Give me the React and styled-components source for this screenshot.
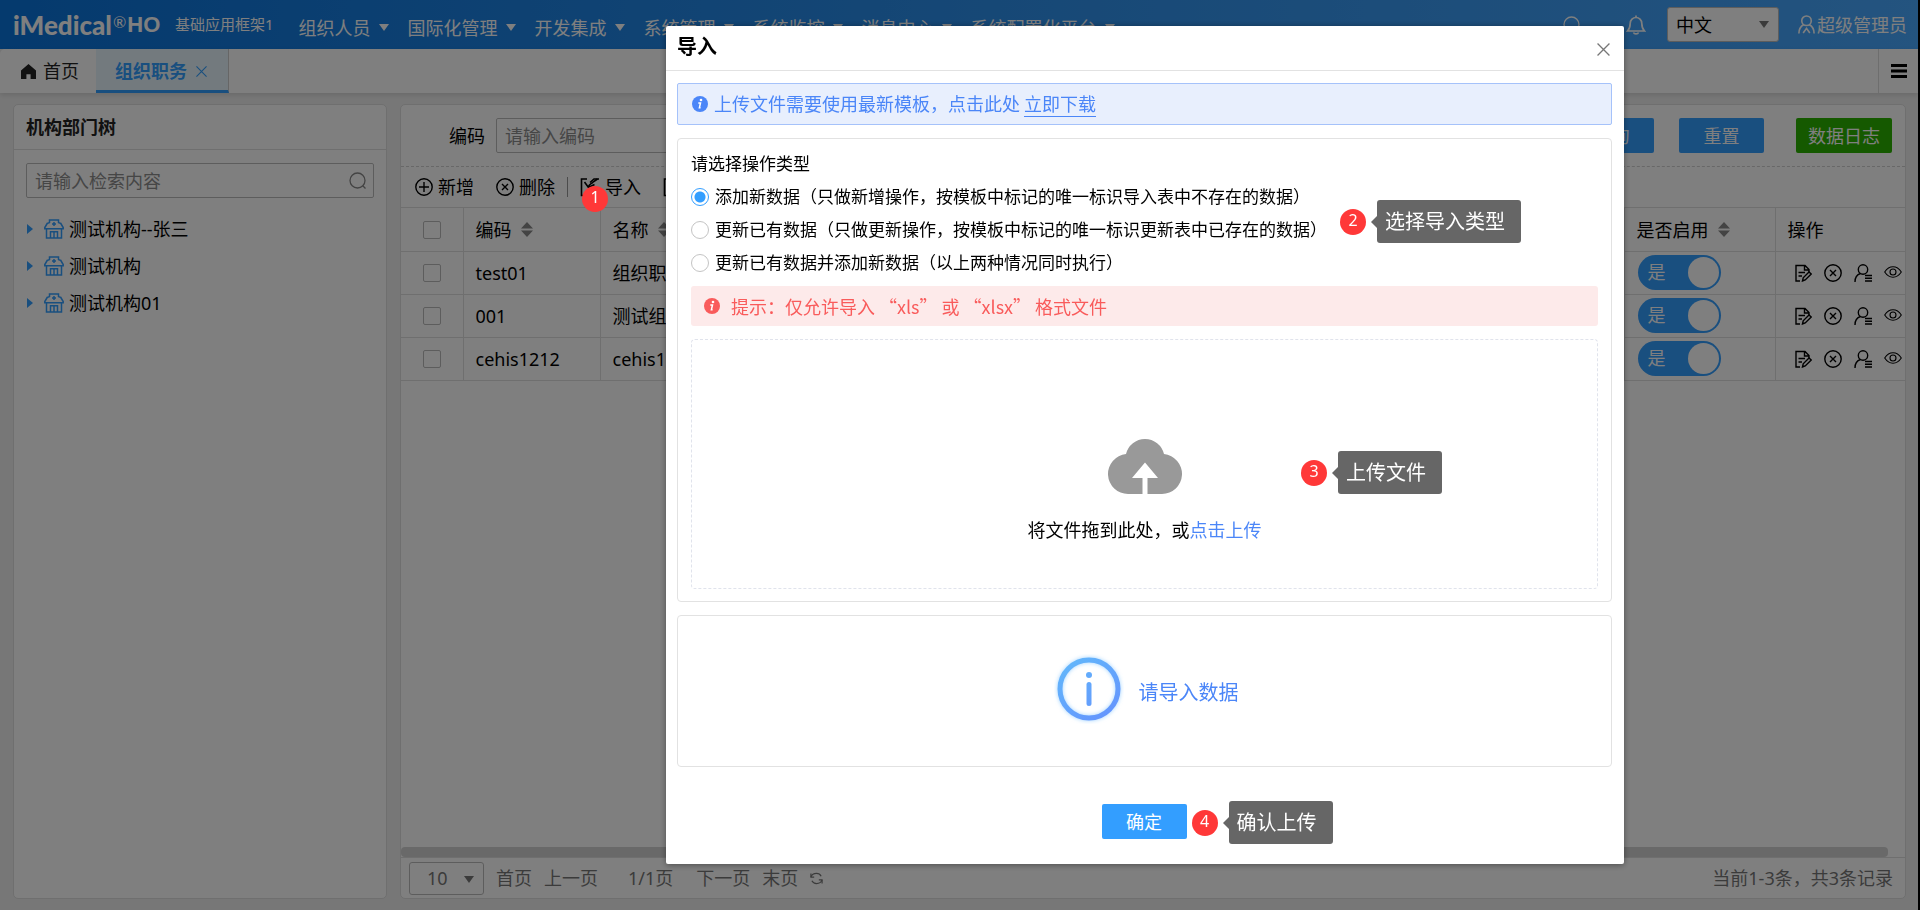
import React, { useState } from 'react';
import styled, { createGlobalStyle, css } from 'styled-components';

const GlobalStyle = createGlobalStyle`
  * {
    box-sizing: border-box;
  }

  body {
    margin: 0;
    font-family: 'Noto Sans', 'Noto Sans CJK SC', sans-serif;
    font-size: 18px;
    line-height: 24px;
    color: #000;
  }

  button,
  input,
  select {
    font: inherit;
    color: inherit;
  }

  button {
    padding: 0;
    border: none;
    background: none;
    cursor: pointer;
  }

  svg {
    display: block;
    flex: none;
  }
`;

const Screen = styled.div`
  display: flex;
  flex-direction: column;
  min-height: 100vh;
  background: #efefef;
  border-right: 2px solid #000;
`;

/* ---------- header ---------- */

const Header = styled.header`
  display: flex;
  align-items: center;
  height: 49px;
  padding: 0 11px 0 13px;
  color: #fff;
  background: linear-gradient(90deg, #0a74dc 0%, #2f92ee 55%, #48a8ff 100%);
`;

const Logo = styled.div`
  display: flex;
  align-items: center;
  width: 162px;
  font-family: Lato, sans-serif;
  font-size: 26px;
  font-weight: 900;
  white-space: nowrap;

  sup {
    margin: 0 1px;
    font-size: 16px;
    font-weight: 400;
    line-height: 18px;
    align-self: flex-start;
  }

  b {
    font-family: 'Liberation Sans', sans-serif;
    font-size: 22px;
    font-weight: 700;
  }
`;

const Subtitle = styled.span`
  padding-bottom: 1px;
  font-size: 15px;
  white-space: nowrap;
`;

const Menu = styled.nav`
  display: flex;
  flex: 1;
  gap: 19px;
  padding: 6px 0 0 25px;
`;

const MenuItem = styled.a`
  display: flex;
  align-items: center;
  gap: 8px;
  color: inherit;
  text-decoration: none;
  white-space: nowrap;
`;

const Caret = styled.span`
  border: 5px solid transparent;
  border-top: 7px solid currentColor;
  border-bottom: none;
`;

const HeaderTools = styled.div`
  display: flex;
  align-items: center;
  gap: 21px;
`;

const IconButton = styled.button`
  display: inline-flex;
  align-items: center;
  justify-content: center;
`;

const SearchButton = styled(IconButton)`
  margin-right: 24px;
`;

const SelectBox = styled.div`
  position: relative;
  color: #000;

  select {
    display: block;
    width: ${(p) => p.$width}px;
    height: 35px;
    padding: 0 24px 0 ${(p) => p.$pad}px;
    border: 1px solid #bbb;
    border-radius: 3px;
    background: #fff;
    appearance: none;
  }

  &::after {
    content: '';
    position: absolute;
    right: 10px;
    top: 14px;
    border: 5px solid transparent;
    border-top: 7px solid #777;
    border-bottom: none;
    pointer-events: none;
  }
`;

const User = styled.a`
  display: flex;
  align-items: center;
  gap: 1px;
  margin-left: -3px;
  color: inherit;
  text-decoration: none;
`;

/* ---------- tabs ---------- */

const TabBar = styled.div`
  display: flex;
  align-items: stretch;
  height: 44px;
  background: #fff;
  border-top-left-radius: 5px;
  box-shadow: 0 2px 5px rgba(0, 0, 0, 0.12);
`;

const Tab = styled.button`
  display: flex;
  align-items: center;
  gap: 7px;
  padding: 0 17px 0 21px;
  color: #222;

  ${(p) =>
    p.$active &&
    css`
      gap: 9px;
      padding: 3px 21px 0 19px;
      color: #339eff;
      font-weight: 700;
      background: #e6f5fc;
      border-bottom: 3px solid #339eff;
      border-right: 1px solid #ccc;
    `}
`;

const TabMenu = styled.button`
  width: 40px;
  margin-left: auto;
  padding-left: 12px;
  border-left: 1px solid #ddd;
`;

/* ---------- panels ---------- */

const Main = styled.main`
  display: flex;
  flex: 1;
  gap: 13px;
  padding: 11px 12px 11px 13px;
`;

const Panel = styled.section`
  display: flex;
  flex-direction: column;
  background: #fff;
  border: 1px solid #dedede;
  border-radius: 5px;
  overflow: hidden;
`;

const TreePanel = styled(Panel)`
  width: 374px;
`;

const GridPanel = styled(Panel)`
  flex: 1;
  min-width: 0;
`;

const PanelTitle = styled.h2`
  margin: 0;
  padding: 10px 12px;
  font-size: 18px;
  line-height: 24px;
  color: #222;
  border-bottom: 1px solid #dedede;
`;

const SearchBox = styled.label`
  display: flex;
  align-items: center;
  height: 35px;
  margin: 13px 12px 12px;
  padding: 0 6px 0 8px;
  border: 1px solid #bbb;
  border-radius: 2px;
  color: #888;

  input {
    flex: 1;
    min-width: 0;
    padding: 0;
    border: none;
    outline: none;
    background: none;
  }

  input::placeholder {
    color: #8c8c8c;
    opacity: 1;
  }
`;

const Tree = styled.ul`
  margin: 0;
  padding: 0 13px;
  list-style: none;
`;

const TreeNode = styled.li`
  display: flex;
  align-items: center;
  height: 37px;
  white-space: nowrap;

  svg {
    margin: 0 5px 0 11px;
    color: #339eff;
  }
`;

const Expander = styled.span`
  border: 5px solid transparent;
  border-left: 6px solid #339eff;
  border-right: none;
`;

const FilterBar = styled.form`
  display: flex;
  align-items: center;
  height: 62px;
  padding: 0 13px 0 48px;
  border-bottom: 1px dashed #d0d0d0;

  label {
    margin-right: 11px;
  }
`;

const FilterInput = styled.input`
  width: 180px;
  height: 35px;
  padding: 0 8px;
  border: 1px solid #bbb;
  border-radius: 2px;

  &::placeholder {
    color: #8c8c8c;
    opacity: 1;
  }
`;

const FilterActions = styled.div`
  display: flex;
  gap: 25px;
  margin-left: auto;
`;

const Button = styled.button`
  min-width: 85px;
  height: 35px;
  padding: 0 12px;
  color: #fff;
  background: ${(p) => (p.$green ? '#2bb300' : '#339eff')};
  border-radius: 2px;
`;

const LogButton = styled(Button)`
  margin-left: 7px;
`;

const Toolbar = styled.div`
  display: flex;
  align-items: center;
  height: 40px;
  padding-left: 14px;
`;

const ToolButton = styled.button`
  position: relative;
  display: flex;
  align-items: center;
  gap: 5px;
  margin-right: 22px;
  white-space: nowrap;
`;

const ToolDivider = styled.span`
  width: 1px;
  height: 20px;
  margin: 0 12px 0 -10px;
  background: #999;
`;

const Table = styled.table`
  width: 100%;
  table-layout: fixed;
  border-collapse: collapse;

  th,
  td {
    height: 43px;
    padding: 0 12px;
    border: 1px solid #dedede;
    border-left: none;
    text-align: left;
    font-weight: 400;
    white-space: nowrap;
    overflow: hidden;
  }

  th {
    height: 44px;
  }

  tr > :last-child {
    border-right: none;
  }

  tr > :first-child {
    padding: 0;
    text-align: center;
  }
`;

const Checkbox = styled.input.attrs({ type: 'checkbox' })`
  display: block;
  width: 18px;
  height: 18px;
  margin: 0 auto;
  border: 1px solid #bbb;
  border-radius: 2px;
  appearance: none;
`;

const HeadCell = styled.span`
  display: inline-flex;
  align-items: center;
  gap: 9px;
`;

const RowActions = styled.div`
  display: flex;
  align-items: center;
  gap: 12px;
  padding-left: 6px;
`;

const SwitchLabel = styled.label`
  display: flex;
  align-items: center;
  width: 83px;
  height: 35px;
  margin: -2px 0 0 1px;
  padding-left: 10px;
  color: #fff;
  background: #339eff;
  border-radius: 18px;

  input {
    width: 31px;
    height: 31px;
    margin: 0 2px 0 auto;
    background: #fff;
    border-radius: 50%;
    appearance: none;
  }
`;

const ScrollTrack = styled.div`
  height: 11px;
  margin-top: auto;
  padding-right: 17px;
  border-bottom: 1px solid #dedede;

  &::before {
    content: '';
    display: block;
    height: 10px;
    border-radius: 4px;
    background: #d2d2d2;
  }
`;

const Pager = styled.footer`
  display: flex;
  align-items: center;
  height: 40px;
  padding: 0 12px 0 8px;
  color: #777;

  select {
    height: 33px;
    color: #777;
  }

  button {
    margin-left: 12px;
  }
`;

const PageCount = styled.span`
  margin: 0 11px 0 30px;
`;

const PagerInfo = styled.span`
  margin-left: auto;
`;

/* ---------- import dialog ---------- */

const Overlay = styled.div`
  position: fixed;
  inset: 0;
  z-index: 10;
  padding: 26px 296px 0 666px;
  background: rgba(0, 0, 0, 0.5);
`;

const Dialog = styled.div`
  background: #fff;
  border-radius: 2px;
  box-shadow: 0 1px 6px rgba(0, 0, 0, 0.4);
`;

const DialogHeader = styled.div`
  display: flex;
  align-items: center;
  justify-content: space-between;
  height: 45px;
  padding: 0 14px 0 11px;
  border-bottom: 1px solid #e2e2e2;

  h1 {
    margin: 0;
    padding-bottom: 2px;
    font-size: 20px;
    line-height: 28px;
  }

  button {
    padding-top: 3px;
    color: #777;
  }
`;

const DialogBody = styled.div`
  display: flex;
  flex-direction: column;
  gap: 13px;
  padding: 12px 12px 0 11px;
`;

const Notice = styled.p`
  display: flex;
  align-items: center;
  gap: 6px;
  height: 42px;
  margin: 0;
  padding-left: 14px;
  color: #4b86f8;
  background: #e8effd;
  border: 1px solid #a5c2fa;
  border-radius: 2px;

  a {
    margin-left: -2px;
    color: inherit;
    text-decoration: none;
    border-bottom: 1px solid currentColor;
  }
`;

const Box = styled.div`
  border: 1px solid #e2e2e2;
  border-radius: 4px;
`;

const ImportBox = styled(Box)`
  position: relative;
  padding: 8px 13px 12px;
`;

const OptionList = styled.div`
  display: flex;
  flex-direction: column;
  font-size: 17px;
  line-height: 33px;

  label {
    display: flex;
    align-items: center;
    gap: 6px;
  }
`;

const Radio = styled.input.attrs({ type: 'radio' })`
  width: 18px;
  height: 18px;
  margin: 0;
  border: 1px solid #c4c4c4;
  border-radius: 50%;
  appearance: none;

  &:checked {
    border-color: #339eff;
    background: radial-gradient(circle, #339eff 5px, #fff 6px);
  }
`;

const Tip = styled.p`
  display: flex;
  align-items: center;
  gap: 11px;
  height: 40px;
  margin: 7px 0 13px;
  padding-left: 13px;
  font-family: 'Noto Sans CJK SC', sans-serif;
  white-space: pre;
  color: #f95b5b;
  background: #fdeaea;
  border-radius: 3px;
`;

const DropArea = styled.div`
  position: relative;
  display: flex;
  flex-direction: column;
  align-items: center;
  height: 250px;
  padding-top: 98px;
  border: 1px dashed #e0e3ec;
  border-radius: 4px;

  p {
    margin: 24px 0 0;
  }

  a {
    color: #4b86f8;
    text-decoration: none;
  }
`;

const ResultBox = styled(Box)`
  display: flex;
  align-items: center;
  justify-content: center;
  gap: 15px;
  height: 152px;
  padding: 0 0 4px 3px;
  font-size: 20px;
  color: #4b86f8;

  span {
    padding-top: 7px;
  }
`;

const DialogFooter = styled.div`
  display: flex;
  justify-content: center;
  padding: 37px 2px 25px 0;
`;

const ConfirmSlot = styled.div`
  position: relative;
`;

/* ---------- step markers ---------- */

const Marker = styled.div`
  position: absolute;
  z-index: 20;
  display: flex;
  align-items: center;
  gap: 11px;
  left: ${(p) => p.$left};
  top: ${(p) => p.$top}px;
`;

const Badge = styled.span`
  width: 26px;
  height: 26px;
  border-radius: 50%;
  font-size: 16px;
  line-height: 23px;
  text-align: center;
  color: #fff;
  background: #ff3838;
`;

const Bubble = styled.span`
  position: relative;
  padding: 0 16px 0 8px;
  font-size: 20px;
  line-height: 43px;
  white-space: nowrap;
  color: #fff;
  background: #666;
  border-radius: 3px;

  &::before {
    content: '';
    position: absolute;
    right: 100%;
    top: 16px;
    border: 6px solid transparent;
    border-right-color: #666;
    border-left: none;
  }
`;

const Step = ({ no, text, left, top }) => (
  <Marker $left={left} $top={top}>
    <Badge>{no}</Badge>
    {text && <Bubble>{text}</Bubble>}
  </Marker>
);

/* ---------- icons ---------- */

const Icon = ({ size = 18, box = 18, width = 1.4, children }) => (
  <svg
    width={size}
    height={size}
    viewBox={`0 0 ${box} ${box}`}
    fill="none"
    stroke="currentColor"
    strokeWidth={width}
    aria-hidden="true"
  >
    {children}
  </svg>
);

const HomeIcon = () => (
  <svg width="15" height="15" viewBox="0 0 15 15" fill="currentColor" aria-hidden="true">
    <path d="M7.5 0 L15 6.4 V15 H9.6 V10.2 H5.4 V15 H0 V6.4 Z" />
  </svg>
);

const CrossIcon = ({ size }) => (
  <Icon size={size} box={12} width={1.2}>
    <path d="M.5.5l11 11M11.5.5l-11 11" />
  </Icon>
);

const SearchIcon = () => (
  <Icon width={1.3}>
    <circle cx="8.5" cy="8.5" r="7.5" />
    <path d="M13.8 13.8l2.700 2.700" />
  </Icon>
);

const BellIcon = () => (
  <Icon size={20} box={20} width={1.7}>
    <path d="M1.5 16h17c-2-2-2.7-4-2.7-7.500C15.800 5 13 2.500 10 2.500S4.200 5 4.200 8.500C4.200 12 3.500 14 1.500 16z" />
    <path d="M7.500 17.500a2.600 2 0 0 0 5 0M10 .5v2" />
  </Icon>
);

const UserIcon = () => (
  <Icon size={19} box={20} width={1.7}>
    <circle cx="10" cy="6" r="5" />
    <path d="M2 19.500c0-4 1.800-7.500 5-9.200M18 19.500c0-4-1.800-7.500-5-9.200M6.500 19l3.500-5 3.500 5" />
  </Icon>
);

const HospitalIcon = () => (
  <Icon size={20} box={20} width={1.5}>
    <path d="M5.500 4V1h9v3M3.500 4h2M14.500 4h2M3.500 4L.8 8.500v1.200h18.400V8.500L16.500 4" />
    <path d="M2.500 9.700V19h15V9.700M6.500 19v-6.200h7V19M10 12.800V19M10 3v4M8 5h4" />
  </Icon>
);

const AddIcon = () => (
  <Icon>
    <circle cx="9" cy="9" r="8.200" />
    <path d="M9 4v10M4 9h10" />
  </Icon>
);

const DeleteIcon = () => (
  <Icon>
    <circle cx="9" cy="9" r="8.200" />
    <path d="M6 6l6 6M12 6l-6 6" />
  </Icon>
);

const ImportIcon = () => (
  <Icon size={20} box={20} width={1.6}>
    <path d="M7 2H1.500v16.500h15V12M4.500 5l4 5.500 6-3M8.500 10c.5-3 3-3 4.500-5L17.500 2" />
    <path d="M10 5.500L14 2h5" />
  </Icon>
);

const ExportIcon = () => (
  <Icon size={20} box={20} width={1.6}>
    <path d="M8 2H1.500v16.500h15V12M6 12c1-5 4-7.500 10-7.500M13 1l4.500 3.500L14 9" />
  </Icon>
);

const EditIcon = () => (
  <Icon>
    <path d="M6 17H2V1.500h9l4 4v2.500M10.500 1.500V6H15M4.500 8.500H11M4.500 12H8" />
    <path d="M8.500 17l.7-3.200L15 8l2.200 2-6 6z" />
  </Icon>
);

const PersonIcon = () => (
  <Icon>
    <circle cx="9" cy="5.500" r="4.700" />
    <path d="M1 18c0-4.500 2-7.500 5.500-8.500M11 11.500h7M11 14.200h7M11 17h7" />
  </Icon>
);

const EyeIcon = () => (
  <Icon width={1.1}>
    <path d="M.7 8C3 4.500 5.800 2.800 9 2.800S15 4.500 17.300 8C15 11.500 12.200 13.200 9 13.200S3 11.500.7 8z" />
    <circle cx="9" cy="8" r="3" />
  </Icon>
);

const MenuIcon = () => (
  <svg width="16" height="14" viewBox="0 0 16 14" fill="currentColor" aria-hidden="true">
    <path d="M0 0h16v3H0zM0 5.500h16v3H0zM0 11h16v3H0z" />
  </svg>
);

const SortIcon = () => (
  <svg width="12" height="15" viewBox="0 0 12 15" fill="#888" aria-hidden="true">
    <path d="M6 0l6 6.500H0zM6 15l6-6.500H0z" />
  </svg>
);

const RefreshIcon = () => (
  <Icon size={13} box={14} width={1.3}>
    <path d="M1 5.500C2 2.500 4 1.500 7 1.500c2 0 4 1 5 3M13 8.500c-1 3-3 4-6 4-2 0-4-1-5-3" />
    <path d="M1 1.500v4h3.500M13 12.500v-4H9.500" />
  </Icon>
);

const InfoDot = () => (
  <svg width="16" height="16" viewBox="0 0 16 16" aria-hidden="true">
    <circle cx="8" cy="8" r="8" fill="currentColor" />
    <circle cx="9" cy="4" r="1.300" fill="#fff" />
    <path d="M6.300 7h2.200l-1.100 4.800h1.200" fill="none" stroke="#fff" strokeWidth="1.500" />
  </svg>
);

const CloudIcon = () => (
  <svg width="74" height="56" viewBox="0 0 74 56" aria-hidden="true">
    <path
      fill="#999"
      d="M20 56a20 20 0 0 1-2-39.900a19.500 19.500 0 0 1 38 0A20 20 0 0 1 54 56H39.500V40H50L37 24.500 24 40h10.500v16z"
    />
  </svg>
);

const InfoRing = () => (
  <svg width="70" height="70" viewBox="0 0 70 70" aria-hidden="true">
    <defs>
      <linearGradient id="ring" gradientUnits="userSpaceOnUse" x1="12" y1="8" x2="52" y2="62">
        <stop offset="0" stopColor="#62b6fb" />
        <stop offset="1" stopColor="#6496fd" />
      </linearGradient>
      <filter id="glow" x="-20%" y="-20%" width="140%" height="140%">
        <feGaussianBlur stdDeviation="2" />
      </filter>
    </defs>
    <circle cx="35" cy="35" r="29" fill="none" stroke="#9fd2ff" strokeWidth="5" filter="url(#glow)" />
    <circle cx="35" cy="35" r="29" fill="none" stroke="url(#ring)" strokeWidth="5" />
    <circle cx="35" cy="21" r="3" fill="url(#ring)" />
    <rect x="32.500" y="28" width="5" height="24" rx="2.500" fill="url(#ring)" />
  </svg>
);

/* ---------- data ---------- */

const menus = ['组织人员', '国际化管理', '开发集成', '系统管理', '系统监控', '消息中心', '系统配置化平台'];

const orgs = ['测试机构--张三', '测试机构', '测试机构01'];

const rows = [
  { code: 'test01', name: '组织职务' },
  { code: '001', name: '测试组织' },
  { code: 'cehis1212', name: 'cehis1212' },
];

const importTypes = [
  '添加新数据（只做新增操作，按模板中标记的唯一标识导入表中不存在的数据）',
  '更新已有数据（只做更新操作，按模板中标记的唯一标识更新表中已存在的数据）',
  '更新已有数据并添加新数据（以上两种情况同时执行）',
];

const TopBar = () => (
  <Header>
    <Logo>
      iMedical<sup>®</sup>
      <b>HO</b>
    </Logo>
    <Subtitle>基础应用框架1</Subtitle>
    <Menu>
      {menus.map((m) => (
        <MenuItem key={m} href="#">
          {m}
          <Caret />
        </MenuItem>
      ))}
    </Menu>
    <HeaderTools>
      <SearchButton aria-label="搜索">
        <SearchIcon />
      </SearchButton>
      <IconButton aria-label="消息">
        <BellIcon />
      </IconButton>
      <SelectBox $width={112} $pad={8}>
        <select aria-label="语言">
          <option>中文</option>
        </select>
      </SelectBox>
      <User href="#">
        <UserIcon />
        超级管理员
      </User>
    </HeaderTools>
  </Header>
);

const OrgTree = () => (
  <TreePanel>
    <PanelTitle>机构部门树</PanelTitle>
    <SearchBox>
      <input placeholder="请输入检索内容" aria-label="检索内容" />
      <SearchIcon />
    </SearchBox>
    <Tree>
      {orgs.map((org) => (
        <TreeNode key={org}>
          <Expander />
          <HospitalIcon />
          {org}
        </TreeNode>
      ))}
    </Tree>
  </TreePanel>
);

const DutyGrid = () => (
  <GridPanel>
    <FilterBar onSubmit={(e) => e.preventDefault()}>
      <label htmlFor="code">编码</label>
      <FilterInput id="code" placeholder="请输入编码" />
      <FilterActions>
        <Button type="submit">查询</Button>
        <Button type="reset">重置</Button>
        <LogButton type="button" $green>
          数据日志
        </LogButton>
      </FilterActions>
    </FilterBar>
    <Toolbar>
      <ToolButton>
        <AddIcon />
        新增
      </ToolButton>
      <ToolButton>
        <DeleteIcon />
        删除
      </ToolButton>
      <ToolDivider />
      <ToolButton>
        <ImportIcon />
        导入
        <Step no={1} left="2px" top={11} />
      </ToolButton>
      <ToolButton>
        <ExportIcon />
        导出
      </ToolButton>
    </Toolbar>
    <Table>
      <colgroup>
        <col width="62" />
        <col width="137" />
        <col width="180" />
        <col />
        <col width="151" />
        <col width="130" />
      </colgroup>
      <thead>
        <tr>
          <th>
            <Checkbox aria-label="全选" />
          </th>
          <th>
            <HeadCell>
              编码 <SortIcon />
            </HeadCell>
          </th>
          <th>
            <HeadCell>
              名称 <SortIcon />
            </HeadCell>
          </th>
          <th />
          <th>
            <HeadCell>
              是否启用 <SortIcon />
            </HeadCell>
          </th>
          <th>操作</th>
        </tr>
      </thead>
      <tbody>
        {rows.map((row) => (
          <tr key={row.code}>
            <td>
              <Checkbox aria-label={row.code} />
            </td>
            <td>{row.code}</td>
            <td>{row.name}</td>
            <td />
            <td>
              <SwitchLabel>
                是
                <input type="checkbox" role="switch" defaultChecked />
              </SwitchLabel>
            </td>
            <td>
              <RowActions>
                <IconButton aria-label="编辑">
                  <EditIcon />
                </IconButton>
                <IconButton aria-label="删除">
                  <DeleteIcon />
                </IconButton>
                <IconButton aria-label="人员">
                  <PersonIcon />
                </IconButton>
                <IconButton aria-label="查看">
                  <EyeIcon />
                </IconButton>
              </RowActions>
            </td>
          </tr>
        ))}
      </tbody>
    </Table>
    <ScrollTrack />
    <Pager>
      <SelectBox $width={75} $pad={17}>
        <select aria-label="每页条数">
          <option>10</option>
        </select>
      </SelectBox>
      <button>首页</button>
      <button>上一页</button>
      <PageCount>1/1页</PageCount>
      <button>下一页</button>
      <button>末页</button>
      <button aria-label="刷新">
        <RefreshIcon />
      </button>
      <PagerInfo>当前1-3条，共3条记录</PagerInfo>
    </Pager>
  </GridPanel>
);

const ImportDialog = () => {
  const [type, setType] = useState(0);

  return (
    <Overlay>
      <Dialog role="dialog" aria-labelledby="import-title">
        <DialogHeader>
          <h1 id="import-title">导入</h1>
          <button aria-label="关闭">
            <CrossIcon size={13} />
          </button>
        </DialogHeader>
        <DialogBody>
          <Notice>
            <InfoDot />
            上传文件需要使用最新模板，点击此处
            <a href="#">立即下载</a>
          </Notice>
          <ImportBox>
            <OptionList role="radiogroup" aria-labelledby="type-title">
              <span id="type-title">请选择操作类型</span>
              {importTypes.map((text, i) => (
                <label key={text}>
                  <Radio name="type" checked={type === i} onChange={() => setType(i)} />
                  {text}
                </label>
              ))}
            </OptionList>
            <Step no={2} text="选择导入类型" left="662px" top={61} />
            <Tip>
              <InfoDot />
              {'提示：仅允许导入 “xls” 或 “xlsx” 格式文件'}
            </Tip>
            <DropArea>
              <CloudIcon />
              <p>
                将文件拖到此处，或<a href="#">点击上传</a>
              </p>
              <Step no={3} text="上传文件" left="609px" top={111} />
            </DropArea>
          </ImportBox>
          <ResultBox>
            <InfoRing />
            <span>请导入数据</span>
          </ResultBox>
        </DialogBody>
        <DialogFooter>
          <ConfirmSlot>
            <Button>确定</Button>
            <Step no={4} text="确认上传" left="calc(100% + 5px)" top={-3} />
          </ConfirmSlot>
        </DialogFooter>
      </Dialog>
    </Overlay>
  );
};

const App = () => (
  <>
    <GlobalStyle />
    <Screen>
      <TopBar />
      <TabBar>
        <Tab>
          <HomeIcon />
          首页
        </Tab>
        <Tab $active>
          组织职务
          <CrossIcon size={11} />
        </Tab>
        <TabMenu aria-label="更多">
          <MenuIcon />
        </TabMenu>
      </TabBar>
      <Main>
        <OrgTree />
        <DutyGrid />
      </Main>
    </Screen>
    <ImportDialog />
  </>
);

export default App;
